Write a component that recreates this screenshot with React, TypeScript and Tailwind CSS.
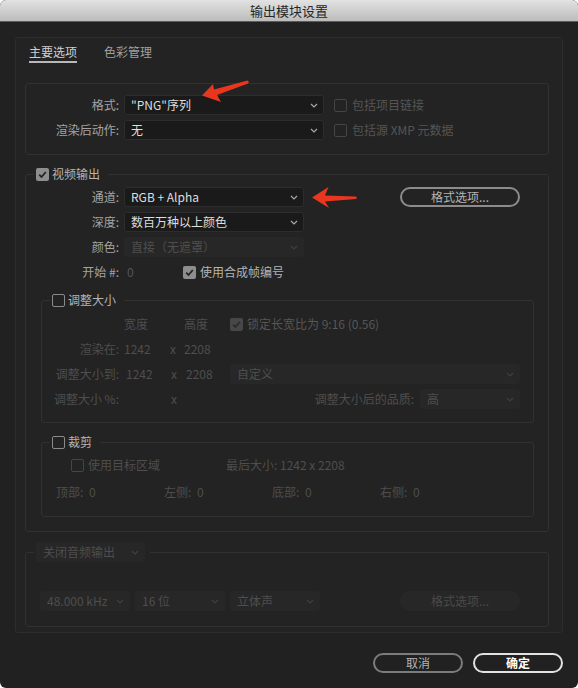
import clsx from 'clsx'

function Chevron({ dim }: { dim?: boolean }) {
  return (
    <svg width="8" height="5" viewBox="0 0 8 5" className={clsx('shrink-0', dim ? 'text-[#3f3f3f]' : 'text-[#a8a8a8]')}>
      <path d="M1 1l3 3 3-3" fill="none" stroke="currentColor" strokeWidth="1.2" />
    </svg>
  )
}

function Select({ value, className, disabled }: { value: string; className?: string; disabled?: boolean }) {
  return (
    <div
      className={clsx(
        'flex h-[20px] shrink-0 items-center justify-between rounded-[3px]',
        disabled
          ? 'bg-[#272727] pl-[7px] pr-[6px] text-[#4e4e4e]'
          : 'border border-[#2d2d2d] bg-[#1a1a1a] pl-[6px] pr-[5px] text-[#dedede]',
        className
      )}
    >
      <span className="whitespace-nowrap">{value}</span>
      <Chevron dim={disabled} />
    </div>
  )
}

function Check({ checked, disabled, className }: { checked?: boolean; disabled?: boolean; className?: string }) {
  if (checked)
    return (
      <span
        className={clsx(
          'flex h-[13px] w-[13px] shrink-0 items-center justify-center rounded-[2px]',
          disabled ? 'bg-[#474747]' : 'bg-[#8e8e8e]',
          className
        )}
      >
        <svg width="11" height="11" viewBox="0 0 11 11">
          <path d="M2.2 5.7l2.3 2.4 4.3-5.1" fill="none" stroke={disabled ? '#2b2b2b' : '#222'} strokeWidth="1.7" />
        </svg>
      </span>
    )
  return (
    <span
      className={clsx(
        'h-[13px] w-[13px] shrink-0 rounded-[2px] border-[1.5px]',
        disabled ? 'border-[#454545]' : 'border-[#8a8a8a]',
        className
      )}
    />
  )
}

function PillButton({ label, className, disabled }: { label: string; className?: string; disabled?: boolean }) {
  return (
    <div
      className={clsx(
        'flex h-[20px] shrink-0 items-center justify-center rounded-full',
        disabled ? 'bg-[#272727] text-[#4a4a4a]' : 'border-2 border-[#8c8c8c] text-[#b4b4b4]',
        className
      )}
    >
      {label}
    </div>
  )
}

function Label({ children, w, dim }: { children: string; w: string; dim?: boolean }) {
  return <span className={clsx('shrink-0 whitespace-nowrap text-right', w, dim ? 'text-[#4e4e4e]' : 'text-[#a3a3a3]')}>{children}</span>
}

function CropField({ label, value }: { label: string; value: string }) {
  return (
    <div className="flex w-[108px] items-center text-[#4e4e4e]">
      <span className="w-[33px] whitespace-nowrap">{label}</span>
      <span>{value}</span>
    </div>
  )
}

export default function App() {
  return (
    <div className="relative h-[688px] w-[578px] bg-white font-['Noto_Sans_CJK_SC','Noto_Sans',sans-serif] text-[12px] leading-none">
      <div className="flex h-full flex-col overflow-hidden rounded-[6px] bg-[#212121]">
        <div className="flex h-[22px] shrink-0 items-center justify-center border-b border-[#5c5c5c] bg-linear-to-b from-[#e2e2e2] to-[#bcbcbc] text-[13px] text-[#262626]">
          输出模块设置
        </div>

        <div className="px-[15px] pt-[15px]">
          <div className="h-[596px] rounded-[3px] border border-[#2d2d2d] bg-[#232323]">
            {/* tabs */}
            <div className="flex gap-[27px] pl-[13px] pt-[6px]">
              <div className="flex flex-col">
                <span className="h-[16px] leading-[16px] text-[#d0d0d0]">主要选项</span>
                <span className="mt-[1px] h-[2px] bg-[#b8b8b8]" />
              </div>
              <div className="flex flex-col">
                <span className="h-[16px] leading-[16px] text-[#a0a0a0]">色彩管理</span>
              </div>
            </div>

            {/* format */}
            <div className="ml-[9px] mt-[20px] flex h-[72px] w-[524px] flex-col gap-[5px] rounded-[3px] border border-[#313131] pt-[11px]">
              <div className="flex h-[20px] items-center">
                <Label w="w-[93px]">格式:</Label>
                <Select className="ml-[5px] w-[200px]" value={'"PNG"序列'} />
                <Check className="ml-[10px]" disabled />
                <span className="ml-[5px] text-[#555]">包括项目链接</span>
              </div>
              <div className="flex h-[20px] items-center">
                <Label w="w-[93px]">渲染后动作:</Label>
                <Select className="ml-[5px] w-[200px]" value="无" />
                <Check className="ml-[10px]" disabled />
                <span className="ml-[5px] text-[#555]">包括源 XMP 元数据</span>
              </div>
            </div>

            {/* video output */}
            <fieldset className="ml-[9px] mt-[10px] w-[524px] rounded-[3px] border border-[#313131] pb-[14px]">
              <legend className="ml-[8px] pl-[2px] pr-[8px]">
                <div className="flex h-[18px] items-center gap-[3px] text-[#b4b4b4]">
                  <Check checked />
                  <span>视频输出</span>
                </div>
              </legend>
              <div className="mt-[4px] flex flex-col gap-[5px]">
                <div className="flex h-[20px] items-center">
                  <Label w="w-[93px]">通道:</Label>
                  <Select className="ml-[5px] w-[180px]" value="RGB + Alpha" />
                  <PillButton className="ml-auto mr-[28px] w-[120px]" label="格式选项..." />
                </div>
                <div className="flex h-[20px] items-center">
                  <Label w="w-[93px]">深度:</Label>
                  <Select className="ml-[5px] w-[180px]" value="数百万种以上颜色" />
                </div>
                <div className="flex h-[20px] items-center">
                  <Label w="w-[93px]">颜色:</Label>
                  <Select className="ml-[5px] w-[180px]" value="直接（无遮罩）" disabled />
                </div>
                <div className="flex h-[20px] items-center">
                  <Label w="w-[93px]">开始 #:</Label>
                  <span className="w-[64px] pl-[8px] text-[#555]">0</span>
                  <Check checked />
                  <span className="ml-[4px] text-[#b4b4b4]">使用合成帧编号</span>
                </div>
              </div>

              {/* resize */}
              <fieldset className="ml-[15px] mt-[9px] w-[493px] rounded-[3px] border border-[#313131] pb-[13px]">
                <legend className="ml-[8px] pl-[2px] pr-[8px]">
                  <div className="flex h-[18px] items-center gap-[3px] text-[#b4b4b4]">
                    <Check />
                    <span>调整大小</span>
                  </div>
                </legend>
                <div className="mt-[5px] flex flex-col gap-[5px] text-[#4e4e4e]">
                  <div className="flex h-[20px] items-center">
                    <span className="w-[77px] shrink-0" />
                    <span className="w-[48px] shrink-0 pl-[5px]">宽度</span>
                    <span className="w-[12px] shrink-0" />
                    <span className="w-[47px] shrink-0 pl-[5px]">高度</span>
                    <Check className="ml-[4px]" checked disabled />
                    <span className="ml-[4px] whitespace-nowrap text-[#565656]">锁定长宽比为 9:16 (0.56)</span>
                  </div>
                  <div className="flex h-[20px] items-center">
                    <Label w="w-[77px]" dim>
                      渲染在:
                    </Label>
                    <span className="w-[48px] shrink-0 pl-[5px]">1242</span>
                    <span className="w-[12px] shrink-0 pl-[3px]">x</span>
                    <span className="w-[47px] shrink-0 pl-[5px]">2208</span>
                  </div>
                  <div className="flex h-[20px] items-center">
                    <Label w="w-[77px]" dim>
                      调整大小到:
                    </Label>
                    <span className="w-[48px] shrink-0 pl-[7px]">1242</span>
                    <span className="w-[12px] shrink-0 pl-[4px]">x</span>
                    <span className="w-[47px] shrink-0 pl-[7px]">2208</span>
                    <Select className="ml-[4px] w-[290px]" value="自定义" disabled />
                  </div>
                  <div className="flex h-[20px] items-center pr-[13px]">
                    <Label w="w-[77px]" dim>
                      调整大小 %:
                    </Label>
                    <span className="w-[48px] shrink-0" />
                    <span className="w-[12px] shrink-0 pl-[4px]">x</span>
                    <span className="ml-auto whitespace-nowrap">调整大小后的品质:</span>
                    <Select className="ml-[6px] w-[100px]" value="高" disabled />
                  </div>
                </div>
              </fieldset>

              {/* crop */}
              <fieldset className="ml-[15px] mt-[10px] w-[493px] rounded-[3px] border border-[#313131] pb-[14px]">
                <legend className="ml-[8px] pl-[2px] pr-[8px]">
                  <div className="flex h-[18px] items-center gap-[3px] text-[#b4b4b4]">
                    <Check />
                    <span>裁剪</span>
                  </div>
                </legend>
                <div className="mt-[4px] flex h-[20px] items-center text-[#4e4e4e]">
                  <div className="flex w-[184px] shrink-0 items-center pl-[29px]">
                    <Check disabled />
                    <span className="ml-[4px]">使用目标区域</span>
                  </div>
                  <span>最后大小: 1242 x 2208</span>
                </div>
                <div className="mt-[7px] flex h-[20px] items-center pl-[14px]">
                  <CropField label="顶部:" value="0" />
                  <CropField label="左侧:" value="0" />
                  <CropField label="底部:" value="0" />
                  <CropField label="右侧:" value="0" />
                </div>
              </fieldset>
            </fieldset>

            {/* audio */}
            <fieldset className="ml-[9px] mt-[10px] w-[524px] rounded-[3px] border border-[#313131] pb-[15px]">
              <legend className="ml-[8px] pl-[2px] pr-[5px]">
                <Select className="w-[109px]" value="关闭音频输出" disabled />
              </legend>
              <div className="mt-[29px] flex h-[20px] items-center pl-[14px]">
                <Select className="w-[90px]" value="48.000 kHz" disabled />
                <Select className="ml-[5px] w-[90px]" value="16 位" disabled />
                <Select className="ml-[5px] w-[90px]" value="立体声" disabled />
                <PillButton className="ml-auto mr-[28px] w-[120px]" label="格式选项..." disabled />
              </div>
            </fieldset>
          </div>

          <div className="mt-[20px] flex justify-end gap-[10px]">
            <div className="flex h-[20px] w-[90px] items-center justify-center rounded-full border-2 border-[#7c7c7c] text-[#b4b4b4]">
              取消
            </div>
            <div className="flex h-[20px] w-[90px] items-center justify-center rounded-full border-2 border-[#e2e2e2] font-bold text-white">
              确定
            </div>
          </div>
        </div>
      </div>

      {/* annotation arrows */}
      <svg className="pointer-events-none absolute left-0 top-0" width="578" height="688" viewBox="0 0 578 688">
        <polygon
          points="202,95.5 213,84 214,89.5 247.5,80.5 249,82 248,83.5 217,95 221,102"
          fill="#e8361f"
        />
        <polygon points="312,197.5 328.5,187 325,195.5 356,196.5 357,198 356,199 325,201.5 329,208" fill="#e8361f" />
      </svg>
    </div>
  )
}
